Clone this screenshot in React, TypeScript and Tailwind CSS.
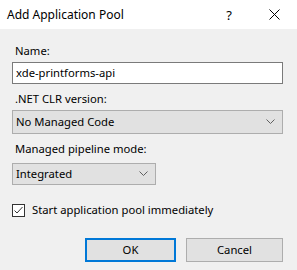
import React from "react";

const font = { fontFamily: '"Noto Sans", "Segoe UI", Arial, sans-serif' };

function Chevron() {
  return (
    <svg width="9" height="6" viewBox="0 0 9 6" className="shrink-0">
      <path d="M0.5 0.5 L4.5 4.5 L8.5 0.5" fill="none" stroke="#606060" strokeWidth="1" />
    </svg>
  );
}

export default function App() {
  return (
    <div className="w-[297px] h-[270px] bg-[#f0f0f0] text-black text-[11.25px] leading-[16px] flex flex-col" style={font}>
      <div className="h-[29px] bg-white flex items-center pl-[7px] shrink-0 text-[12px]">
        <span className="flex-1">Add Application Pool</span>
        <span className="w-[46px] text-center text-[13px] pl-[2px]">?</span>
        <span className="w-[46px] flex justify-center pl-[1px]">
          <svg width="11" height="11" viewBox="0 0 11 11">
            <path d="M0.5 0.5 L10.5 10.5 M10.5 0.5 L0.5 10.5" stroke="#000" strokeWidth="1" />
          </svg>
        </span>
      </div>
      <div className="flex flex-col pl-[12px] pr-[14px] pt-[14px]">
        <div className="pl-[3px]">Name:</div>
        <div className="mt-[3px] h-[22px] border border-[#7a7a7a] bg-white flex items-center pl-[3px]">xde-printforms-api</div>
        <div className="mt-[7px] pl-[3px]">.NET CLR version:</div>
        <div className="mt-[3px] h-[24px] border border-[#adadad] bg-[#e1e1e1] flex items-center pl-[3px] pr-[7px]">
          <span className="flex-1">No Managed Code</span>
          <Chevron />
        </div>
        <div className="mt-[7px] pl-[3px]">Managed pipeline mode:</div>
        <div className="mt-[6px] w-[144px] h-[22px] border border-[#adadad] bg-[#e1e1e1] flex items-center pl-[3px] pr-[7px]">
          <span className="flex-1">Integrated</span>
          <Chevron />
        </div>
        <div className="mt-[17px] flex items-center">
          <div className="w-[13px] h-[13px] border border-[#333] bg-white flex items-center justify-center">
            <svg width="11" height="11" viewBox="0 0 11 11">
              <path d="M1.5 5.5 L4 8 L9.5 2" fill="none" stroke="#333" strokeWidth="1" />
            </svg>
          </div>
          <span className="ml-[7px]">Start application pool immediately</span>
        </div>
        <div className="mt-[20px] flex justify-end gap-[10px]">
          <div className="w-[91px] h-[24px] border-2 border-[#0078d7] bg-[#e1e1e1] flex items-center justify-center">OK</div>
          <div className="w-[97px] h-[24px] border border-[#adadad] bg-[#e1e1e1] flex items-center justify-center">Cancel</div>
        </div>
      </div>
    </div>
  );
}
